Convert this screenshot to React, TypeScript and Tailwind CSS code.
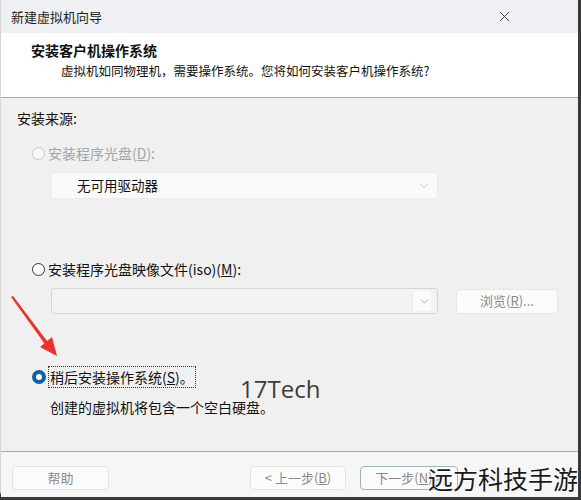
import { X, ChevronDown } from 'lucide-react';

const font = { fontFamily: '"Noto Sans CJK SC", "Noto Sans", sans-serif' };

function Radio({ state }: { state: 'disabled' | 'off' | 'on' }) {
    if (state === 'on') {
        return <span className="w-[14px] h-[14px] rounded-full border-[4px] border-[#0f5fa8] bg-white shrink-0" />;
    }
    return (
        <span
            className={
                state === 'disabled'
                    ? 'w-[13px] h-[13px] rounded-full border border-[#c8c8c8] bg-[#f7f7f7] shrink-0'
                    : 'w-[13px] h-[13px] rounded-full border border-[#333] bg-white shrink-0'
            }
        />
    );
}

function Button({ children, width, focused }: { children: React.ReactNode; width: string; focused?: boolean }) {
    return (
        <div
            className={`${width} h-[24px] flex items-center justify-center rounded-[4px] bg-[#fbfbfb] text-[13px] text-[#8a8a8a] ${
                focused ? 'border border-[#9fb3bd]' : 'border border-[#e3e3e3]'
            }`}
        >
            {children}
        </div>
    );
}

export default function App() {
    return (
        <div className="w-[581px] h-[500px] bg-[#3a3a3a] relative overflow-hidden" style={font}>
            <div className="w-[578px] h-[497px] bg-[#f0f0f0] border-l border-[#d6d6d6] rounded-bl-[6px] flex flex-col">
                {/* title bar */}
                <div className="h-[33px] bg-[#eef0f3] flex items-center justify-between pl-[10px]">
                    <span className="text-[13px] text-[#1f1f1f]">新建虚拟机向导</span>
                    <div className="w-[46px] h-[33px] mr-[51px] flex items-center justify-center">
                        <X className="w-[17px] h-[17px] text-[#333]" strokeWidth={1.3} />
                    </div>
                </div>

                {/* header */}
                <div className="h-[65px] bg-white border-b border-[#a9a9a9] pl-[30px] pt-[7px]">
                    <div className="text-[14px] font-bold text-[#111] leading-[20px]">安装客户机操作系统</div>
                    <div className="text-[12.5px] text-[#111] leading-[20px] mt-[1px] pl-[30px]">
                        虚拟机如同物理机，需要操作系统。您将如何安装客户机操作系统?
                    </div>
                </div>

                {/* body */}
                <div className="h-[354px] border-b border-[#a9a9a9] pl-[16px] pt-[10px] text-[14px] text-[#111]">
                    <div className="leading-[20px]">安装来源:</div>

                    <div className="flex items-center gap-[3px] mt-[15px] pl-[15px] leading-[20px] text-[#a5a5a5]">
                        <Radio state="disabled" />
                        <span>
                            安装程序光盘(<span className="underline">D</span>):
                        </span>
                    </div>
                    <div className="mt-[9px] ml-[34px] w-[387px] h-[27px] bg-[#fafafa] border border-[#ececec] rounded-[3px] flex items-center justify-between pl-[25px] pr-[6px]">
                        <span className="text-[13.5px] text-[#111]">无可用驱动器</span>
                        <ChevronDown className="w-[14px] h-[14px] text-[#b9b9b9]" strokeWidth={1.5} />
                    </div>

                    <div className="flex items-center gap-[3px] mt-[60px] pl-[15px] leading-[20px]">
                        <Radio state="off" />
                        <span>
                            安装程序光盘映像文件(iso)(<span className="underline">M</span>):
                        </span>
                    </div>
                    <div className="flex items-center mt-[9px] ml-[34px] gap-[18px]">
                        <div className="w-[387px] h-[26px] bg-[#f3f3f3] border border-[#d6d6d6] rounded-[3px] flex items-center justify-end pr-[6px]">
                            <div className="h-[20px] border-l border-[#e8e8e8] pl-[5px] flex items-center bg-[#fbfbfb]">
                                <ChevronDown className="w-[13px] h-[13px] text-[#9a9a9a]" strokeWidth={1.5} />
                            </div>
                        </div>
                        <div className="w-[102px] h-[25px] rounded-[4px] bg-[#fbfbfb] border border-[#e6e6e6] flex items-center justify-center text-[13px] text-[#8a8a8a]">
                            浏览(<span className="underline">R</span>)...
                        </div>
                    </div>

                    <div className="flex items-center gap-[2px] mt-[52px] pl-[15px]">
                        <Radio state="on" />
                        <span className="border border-dotted border-[#333] px-[1px] leading-[20px]">
                            稍后安装操作系统(<span className="underline">S</span>)。
                        </span>
                    </div>
                    <div className="mt-[9px] pl-[33px] leading-[20px]">创建的虚拟机将包含一个空白硬盘。</div>
                </div>

                {/* footer */}
                <div className="flex-1 bg-[#f6f6f6] flex items-start pt-[14px] pl-[11px]">
                    <Button width="w-[97px]">帮助</Button>
                    <div className="ml-[141px]">
                        <Button width="w-[96px]">&lt; 上一步(<span className="underline">B</span>)</Button>
                    </div>
                    <div className="ml-[14px]">
                        <Button width="w-[98px]" focused>
                            下一步(<span className="underline">N</span>) &gt;
                        </Button>
                    </div>
                </div>
            </div>

            {/* red annotation arrow */}
            <svg className="absolute left-0 top-0" width="581" height="500" viewBox="0 0 581 500">
                <polygon points="11,297 13,296 50,345 47,347" fill="#e8322b" />
                <polygon points="57,356 40,347 52,337" fill="#e8322b" />
            </svg>

            {/* watermarks */}
            <div
                className="absolute left-[240px] top-[377px] text-[24px] text-[#3c3c3c] leading-none"
                style={{ fontFamily: '"Open Sans", "Noto Sans", sans-serif' }}
            >
                17Tech
            </div>
            <div className="absolute left-[428px] top-[466px] text-[25px] whitespace-nowrap text-[#1a1a1a] leading-none [text-shadow:0_0_2px_#fff,0_0_2px_#fff]">
                远方科技手游
            </div>
        </div>
    );
}
